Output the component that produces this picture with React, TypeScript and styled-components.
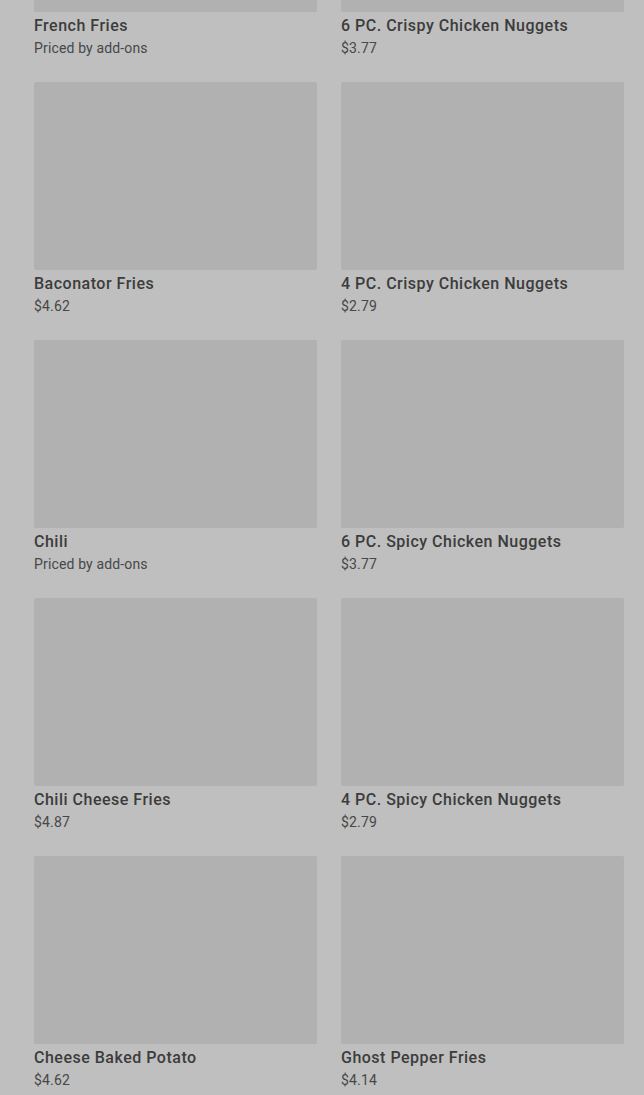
import React from "react";
import styled, { createGlobalStyle } from "styled-components";

const GlobalStyle = createGlobalStyle`
  html, body {
    margin: 0;
    padding: 0;
    background: #bfbfbf;
    overflow: hidden;
  }
  body {
    font-family: Roboto, "Liberation Sans", sans-serif;
  }
`;

const Page = styled.div`
  width: 644px;
  height: 1095px;
  overflow: hidden;
  background: #bfbfbf;
`;

const Grid = styled.div`
  display: grid;
  grid-template-columns: 283px 283px;
  column-gap: 24px;
  row-gap: 24px;
  padding: 0 20px 0 34px;
  margin-top: -176px;
`;

const Card = styled.div`
  display: flex;
  flex-direction: column;
`;

const Thumb = styled.div`
  height: 188px;
  background: #b1b1b1;
  border-radius: 2px;
`;

const Title = styled.div`
  margin-top: 4px;
  font-size: 16px;
  line-height: 20px;
  font-weight: 500;
  letter-spacing: 0.5px;
  color: #3c3c3c;
`;

const Price = styled.div`
  margin-top: 3px;
  font-size: 14px;
  line-height: 19px;
  letter-spacing: 0.15px;
  color: #474747;
`;

const items = [
  { name: "French Fries", price: "Priced by add-ons" },
  { name: "6 PC. Crispy Chicken Nuggets", price: "$3.77" },
  { name: "Baconator Fries", price: "$4.62" },
  { name: "4 PC. Crispy Chicken Nuggets", price: "$2.79" },
  { name: "Chili", price: "Priced by add-ons" },
  { name: "6 PC. Spicy Chicken Nuggets", price: "$3.77" },
  { name: "Chili Cheese Fries", price: "$4.87" },
  { name: "4 PC. Spicy Chicken Nuggets", price: "$2.79" },
  { name: "Cheese Baked Potato", price: "$4.62" },
  { name: "Ghost Pepper Fries", price: "$4.14" },
];

const App = () => {
  return (
    <Page>
      <GlobalStyle />
      <Grid>
        {items.map(item => (
          <Card key={item.name}>
            <Thumb />
            <Title>{item.name}</Title>
            <Price>{item.price}</Price>
          </Card>
        ))}
      </Grid>
    </Page>
  );
};

export default App;
